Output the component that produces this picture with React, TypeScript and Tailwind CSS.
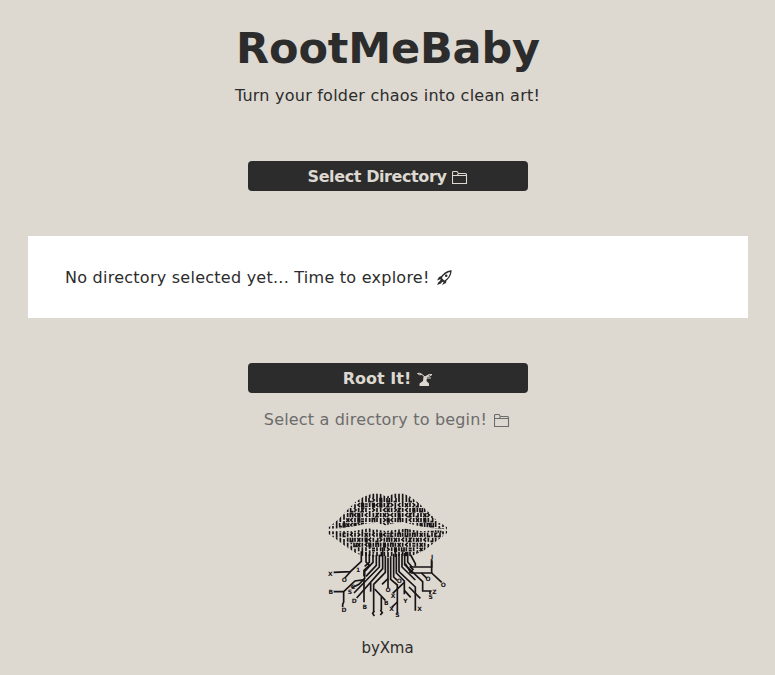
import type { ReactNode } from 'react';

type Point = [number, number];

const upperTop: Point[] = [[20, 121], [48, 98], [75, 70], [100, 45], [125, 29], [150, 20], [175, 20], [193, 29], [215, 20], [245, 20], [265, 29], [290, 48], [320, 76], [345, 101], [375, 121]];
const upperBottom: Point[] = [[20, 126], [60, 124], [100, 117], [140, 109], [165, 108], [190, 115], [220, 108], [250, 107], [290, 117], [330, 124], [375, 127]];
const lowerTop: Point[] = [[20, 132], [60, 133], [100, 131], [140, 124], [190, 132], [250, 125], [300, 133], [340, 130], [375, 132]];
const lowerBottom: Point[] = [[20, 141], [45, 158], [70, 178], [100, 197], [120, 206], [190, 212], [270, 206], [305, 191], [345, 161], [375, 138]];

const outline = (top: Point[], bottom: Point[]) => [...top, ...[...bottom].reverse()].map((p) => p.join(',')).join(' ');

// Circuit marks on an 11 x 15 cell.
const marks: Record<string, string> = {
  '|': 'M5 0V12',
  i: 'M5 4V15',
  I: 'M5 0V15',
  ':': 'M5 0V5M5 9V15',
  '<': 'M9 0L3 6L9 12',
  '>': 'M2 0L8 6L2 12',
  '=': 'M1 3H10M1 10H10',
  z: 'M1 2H8L2 11H10',
  s: 'M10 2H3V7H8V12H1',
  x: 'M1 1L10 12M10 1L1 12',
  n: 'M2 13V2H9V13',
  u: 'M2 0V11H9V0',
  c: 'M10 2H3V11H10',
  j: 'M7 0V11H0',
  l: 'M3 0V11H11',
};

// Thirty-three marks per row, starting at the left corner of the mouth.
const rows: [number, string][] = [
  [18, 'IIIIIIIIIIIIIIIiIiIIIIIIIIIIIIIII'],
  [33, 'IIIIIIII|I|l>|s|u|j|I|l|iIIIIIIII'],
  [48, 'IIIIII|i<s=|E<s|z>I<|x|>j|IIIIIII'],
  [63, 'IIIII|l>|z|:>||<x|>z|<|s|u|iIIIII'],
  [78, 'IIIIi|n<s|<||z|x><|s|<z|j|x>:IIII'],
  [93, 'III|:x<|s=||n|I>s<|n|I<|x|o|j:|II'],
  [108, 'I:Ilsx<s>c|||||>|x|||||l|s|nu|:|I'],
  [124, 'I:I|I|:||I||i||||I|I|n||I|||=|n:I'],
  [137, 'I:I|c|<|>|x|<|s<=c|n|u|n|x|l|cj:I'],
  [152, 'IIIIi|u|x|s<|j>|n|x|<|z|x|<|j|III'],
  [167, 'IIIII|:ux|<s|n|o|n|x|<|=|x|i|IIII'],
  [181, 'IIIIIIIi|I|:=|||>|s|u|=|:x|IIIIII'],
  [195, 'IIIIIIIIi|I|:|j|I|I||sI|=|:IIIIII'],
];

const traces = [
  'M118 193V223L85 254L35 256', 'M85 254L68 274',
  'M132 196V225L142 235L126 250V268', 'M142 202V226L128 238',
  'M35 314H65L99 282L126 278V346', 'M65 314V345L62 352V360',
  'M153 202V226L128 253V274L111 292L90 302',
  'M163 203V235L132 268', 'M172 203V240L96 318',
  'M182 181V245L104 333', 'M146 288V314',
  'M190 206V256L155 292V374', 'M158 306L190 340', 'M178 330V370',
  'M198 212V304', 'M180 292L198 275',
  'M206 208V277L226 294V380', 'M212 319L247 286', 'M209 361L226 345',
  'M215 200V270L226 280', 'M223 200V258L247 282V322', 'M247 310L266 331',
  'M231 200V254L280 300V371', 'M261 300L295 334',
  'M240 200V240L280 279', 'M248 198V233L302 284V312H329', 'M324 312V322',
  'M257 195V225L270 240H329V220', 'M266 204L280 230V238',
  'M267 258H329L359 286', 'M329 220V258', 'M250 230L267 258', 'M298 258L315 274',
  'M263 238L273 247L263 258', 'M157 372L152 379L157 387', 'M175 369L181 377L175 384',
];

const terminals: [string, number, number][] = [
  ['X', 25, 268], ['O', 67, 286], ['B', 26, 320], ['D', 66, 375], ['D', 97, 348], ['B', 128, 367],
  ['S', 84, 321], ['C', 93, 307], ['1', 108, 254], ['O', 198, 316], ['O', 232, 289], ['B', 193, 355],
  ['X', 213, 333], ['X', 209, 373], ['S', 226, 390], ['Y', 250, 348],
  ['X', 293, 371], ['O', 318, 283], ['O', 364, 301], ['Z', 337, 320], ['S', 326, 335], ['J', 330, 217],
];

function CircuitLips() {
  return (
    <svg viewBox="0 0 390 402" className="block h-[134px] w-[130px]" fill="none" stroke="#171316" strokeWidth="5">
      <defs>
        <clipPath id="lips">
          <polygon points={outline(upperTop, upperBottom)} />
          <polygon points={outline(lowerTop, lowerBottom)} />
        </clipPath>
      </defs>
      <g clipPath="url(#lips)">
        {rows.map(([y, row]) =>
          [...row].map((mark, i) => (
            <path key={`${y}-${i}`} d={marks[mark] ?? marks.s} transform={`translate(${17 + i * 11} ${y})`} />
          )),
        )}
      </g>
      {traces.map((d) => (
        <path key={d} d={d} />
      ))}
      <g fill="#171316" stroke="none" fontFamily="DejaVu Sans" fontSize="18" fontWeight="700" textAnchor="middle">
        {terminals.map(([letter, x, y]) => (
          <text key={`${x}-${y}`} x={x} y={y}>{letter}</text>
        ))}
      </g>
    </svg>
  );
}

function FolderIcon() {
  return (
    <svg viewBox="0 0 16 16" className="h-4 w-4 shrink-0" fill="none" stroke="currentColor" strokeWidth="1.1">
      <path d="M.5 13.5V2.5Q.5 1.5 1.5 1.5H5L6.5 3.5H13.5Q14.5 3.5 14.5 4.5V13.5ZM.5 5.5H5L6.5 3.5M5 5.5H14.5" />
    </svg>
  );
}

function RocketIcon() {
  return (
    <svg viewBox="0 0 16 16" className="h-4 w-4 shrink-0" fill="none" stroke="currentColor" strokeWidth="1.3">
      <path d="M4 8Q7.5 2 14 1Q13.5 8 7 11.5Z" />
      <circle cx="9.2" cy="5.8" r="1.3" fill="currentColor" stroke="none" />
      <path d="M5.5 5.5L2 7L0 10.5L4 9ZM9.5 10.5L9 13L5 15L7 11.5Z" fill="currentColor" stroke="none" />
      <path d="M4 8L7.5 11.5L5 12L4 13.5L0 15L1.5 12L3 11Z" fill="currentColor" stroke="none" />
    </svg>
  );
}

function TreeIcon() {
  return (
    <svg viewBox="0 0 16 16" className="h-4 w-4 shrink-0" fill="none" stroke="currentColor" strokeWidth="1">
      <path d="M.5 1.5Q3 .5 5 2.5Q2.5 3.5 .5 1.5ZM9 4.5Q11 2 15 2.5Q13 5 9 4.5ZM5 2.5L8 5L12 3M9 6H14" />
      <path d="M6.5 4.5H10L9.5 9L12 11.5V14H2.5V11.5L6 9Z" fill="currentColor" stroke="none" />
    </svg>
  );
}

function ActionButton({ children }: { children: ReactNode }) {
  return (
    <button className="flex h-[30px] w-[280px] items-center justify-center rounded-[4px] bg-[#2c2c2c] pt-[2px] text-[16px] font-bold whitespace-nowrap text-[#ddd8d0]">
      {children}
    </button>
  );
}

export default function App() {
  return (
    <main className="flex h-[675px] w-[775px] flex-col items-center overflow-hidden bg-[#ddd8d0] pt-5 pl-px font-['DejaVu_Sans',sans-serif] text-[16px] leading-6 text-[#2c2c2c]">
      <h1 className="text-[43px] leading-[56px] font-bold tracking-[-0.15px]">RootMeBaby</h1>
      <p className="mt-2 pr-px tracking-[0.23px]">Turn your folder chaos into clean art!</p>

      <div className="mt-[53px]">
        <ActionButton>
          <span className="tracking-[-0.4px]">Select Directory</span>
          <span className="ml-[6px] pt-px"><FolderIcon /></span>
        </ActionButton>
      </div>

      <section className="mt-[45px] flex h-[82px] w-[720px] items-center bg-white pt-[2px] pl-[37px]">
        <span className="tracking-[0.25px]">No directory selected yet... Time to explore!</span>
        <span className="ml-[7px]"><RocketIcon /></span>
      </section>

      <div className="mt-[45px]">
        <ActionButton>
          <span>Root It!</span>
          <span className="ml-[6px] pt-px"><TreeIcon /></span>
        </ActionButton>
      </div>

      <div className="mt-[15px] flex items-center pr-[2px] text-[#6c6c6c]">
        <span className="tracking-[0.18px]">Select a directory to begin!</span>
        <span className="ml-[7px] pt-px"><FolderIcon /></span>
      </div>

      <div className="mt-[55px] mr-[3px]"><CircuitLips /></div>
      <footer className="mt-[15px] pr-px text-[15px] tracking-[-0.1px]">byXma</footer>
    </main>
  );
}
